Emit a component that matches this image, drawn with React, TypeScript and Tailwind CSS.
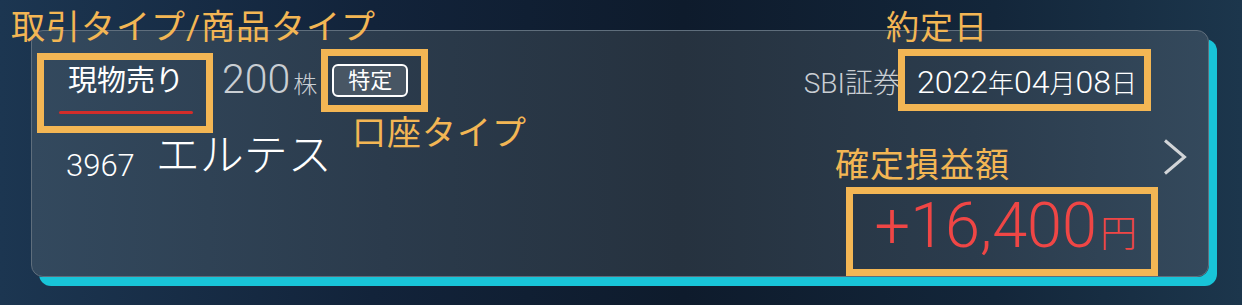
import React from "react";

const font = { fontFamily: 'Roboto, "Noto Sans CJK JP", sans-serif' };

export default function App() {
  return (
    <div
      className="relative w-[1242px] h-[305px] overflow-hidden bg-[linear-gradient(90deg,#1c3651_0%,#12233a_30%,#0e1b2c_55%,#13263a_80%,#1c364c_100%)] pt-[30px] pl-[31px]"
      style={font}
    >
      {/* Card */}
      <div className="w-[1178px] h-[247px] rounded-[12px] border-[1.5px] border-[#5f6e7c] bg-[linear-gradient(90deg,#33495e_0%,#2b3b4c_30%,#26323f_55%,#2b3c4d_80%,#34495c_100%)] shadow-[8px_9px_0_0_#18c4d8] flex pl-[27px] pr-[21px]">
        <div className="flex-1 flex flex-col">
          {/* Row 1 */}
          <div className="flex items-start justify-between">
            <div className="flex items-start">
              <div className="w-[134px] flex flex-col items-center pt-[33px]">
                <div className="text-[29px] leading-[34px] text-white">現物売り</div>
                <div className="mt-[13px] w-full h-[3px] rounded-full bg-[#d22d2a]" />
              </div>
              <div className="ml-[29px] mt-[28px] flex items-baseline text-[#c9ced3] font-light">
                <span className="text-[41px] leading-[40px]">200</span>
                <span className="ml-[3px] text-[24px] leading-[40px]">株</span>
              </div>
              <div className="ml-[15px] mt-[33px] h-[33px] px-[14px] rounded-[6px] border-[2.5px] border-white bg-[#485664] flex items-center text-[22px] leading-[22px] text-white">
                特定
              </div>
            </div>
            <div className="mt-[34px] flex items-baseline font-light">
              <span className="text-[28px] leading-[34px] text-[#c9ced3]">SBI証券</span>
              <span className="ml-[16px] text-[32px] leading-[34px] text-white">2022</span>
              <span className="text-[26px] leading-[34px] text-white">年</span>
              <span className="text-[32px] leading-[34px] text-white">04</span>
              <span className="text-[26px] leading-[34px] text-white">月</span>
              <span className="text-[32px] leading-[34px] text-white">08</span>
              <span className="text-[26px] leading-[34px] text-white">日</span>
            </div>
          </div>
          {/* Row 2 */}
          <div className="mt-[18px] flex items-end">
            <span className="ml-[7px] text-[31px] leading-[34px] text-white font-light">3967</span>
            <span className="ml-[21px] mb-[3px] text-[44px] leading-[48px] text-white font-light">エルテス</span>
          </div>
          {/* Row 3 */}
          <div className="mt-[10px] flex justify-end items-baseline text-[#ef4645] font-light">
            <span className="text-[63px] leading-[66px]">+16,400</span>
            <span className="ml-[3px] text-[37px] leading-[66px]">円</span>
          </div>
        </div>
        <div className="ml-[26px] mt-[7px] flex items-center">
          <svg width="24" height="36" viewBox="0 0 24 36" fill="none">
            <polyline points="2,1.5 21.5,18 2,34.5" stroke="#d2d5d8" strokeWidth="3" strokeLinejoin="miter" />
          </svg>
        </div>
      </div>

      {/* Annotations */}
      <div className="absolute left-[11px] top-[8px] text-[34px] leading-[38px] tracking-[1px] text-[#f3b654]">
        取引タイプ/商品タイプ
      </div>
      <div className="absolute left-[37px] top-[53px] w-[176px] h-[80px] border-[7px] border-[#f3b654]" />
      <div className="absolute left-[321px] top-[49px] w-[107px] h-[63px] border-[7px] border-[#f3b654]" />
      <div className="absolute left-[352px] top-[114px] text-[34px] leading-[38px] tracking-[1px] text-[#f3b654]">
        口座タイプ
      </div>
      <div className="absolute left-[886px] top-[9px] text-[33px] leading-[38px] tracking-[1px] text-[#f3b654]">
        約定日
      </div>
      <div className="absolute left-[898px] top-[49px] w-[253px] h-[62px] border-[7px] border-[#f3b654]" />
      <div className="absolute left-[835px] top-[146px] text-[34px] leading-[38px] tracking-[1px] text-[#f3b654]">
        確定損益額
      </div>
      <div className="absolute left-[846px] top-[187px] w-[312px] h-[89px] border-[7px] border-[#f3b654]" />
    </div>
  );
}
